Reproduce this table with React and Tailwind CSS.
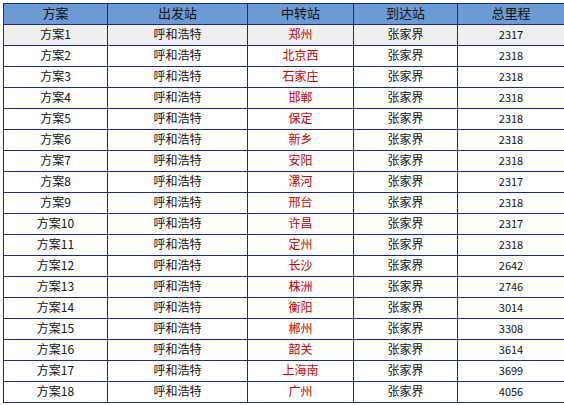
const rows = [
  ['方案1', '郑州', '2317'],
  ['方案2', '北京西', '2318'],
  ['方案3', '石家庄', '2318'],
  ['方案4', '邯郸', '2318'],
  ['方案5', '保定', '2318'],
  ['方案6', '新乡', '2318'],
  ['方案7', '安阳', '2318'],
  ['方案8', '漯河', '2317'],
  ['方案9', '邢台', '2318'],
  ['方案10', '许昌', '2317'],
  ['方案11', '定州', '2318'],
  ['方案12', '长沙', '2642'],
  ['方案13', '株洲', '2746'],
  ['方案14', '衡阳', '3014'],
  ['方案15', '郴州', '3308'],
  ['方案16', '韶关', '3614'],
  ['方案17', '上海南', '3699'],
  ['方案18', '广州', '4056'],
];

const cell = 'border border-[#1c2a8c] h-[21px] p-0 pb-[2px] text-center align-middle leading-[18px]';

export default function App() {
  return (
    <div className="w-[564px] h-[405px] bg-white pt-[3px] pl-[3px] text-[12px] text-[#111]" style={{ fontFamily: '"Noto Sans CJK SC", "Liberation Sans", sans-serif' }}>
      <table className="table-fixed border-collapse w-[561px]">
        <colgroup>
          <col className="w-[104px]" />
          <col className="w-[140px]" />
          <col className="w-[106px]" />
          <col className="w-[104px]" />
          <col className="w-[107px]" />
        </colgroup>
        <thead>
          <tr className="bg-[#6b9bd2] text-[13px]">
            <th className={cell + ' font-normal'}>方案</th>
            <th className={cell + ' font-normal'}>出发站</th>
            <th className={cell + ' font-normal'}>中转站</th>
            <th className={cell + ' font-normal'}>到达站</th>
            <th className={cell + ' font-normal'}>总里程</th>
          </tr>
        </thead>
        <tbody>
          {rows.map((r, i) => (
            <tr key={r[0]} className={i === 0 ? 'bg-[#efefef]' : 'bg-white'}>
              <td className={cell}>{r[0]}</td>
              <td className={cell}>呼和浩特</td>
              <td className={cell + ' text-[#c80000]'}>{r[1]}</td>
              <td className={cell}>张家界</td>
              <td className={cell + ' text-[11px]'}>{r[2]}</td>
            </tr>
          ))}
        </tbody>
      </table>
    </div>
  );
}
